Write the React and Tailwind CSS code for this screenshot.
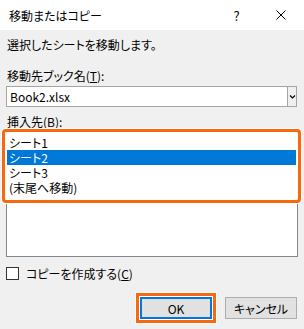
import React from 'react';

const font = { fontFamily: '"Noto Sans CJK JP", "Noto Sans", sans-serif' };

const sheets = ['シート1', 'シート2', 'シート3', '(末尾へ移動)'];

export default function App() {
  return (
    <div
      className="w-[304px] h-[329px] bg-[#f0f0f0] text-[12px] leading-[15px] text-black overflow-hidden [font-feature-settings:'palt']"
      style={font}
    >
      {/* title bar */}
      <div className="h-[30px] bg-white flex items-center">
        <div className="flex-1 pl-[9px] text-[12px]">移動またはコピー</div>
        <div className="w-[46px] h-full flex items-center justify-center text-[13px] pl-[3px]">?</div>
        <div className="w-[46px] h-full flex items-center justify-center">
          <svg width="10" height="10" viewBox="0 0 10 10">
            <path d="M0.5 0.5 L9.5 9.5 M9.5 0.5 L0.5 9.5" stroke="#000" strokeWidth="1" fill="none" />
          </svg>
        </div>
      </div>

      <div className="px-[6px] pt-[7px] flex flex-col">
        <div className="pl-px">選択したシートを移動します。</div>

        <div className="mt-[16px] pl-px">
          移動先ブック名(<span className="underline">T</span>):
        </div>
        <div className="mt-[3px] h-[21px] mr-px flex border border-[#a5a5a5] bg-white">
          <div className="flex-1 flex items-center pl-[3px] text-[12px]">Book2.xlsx</div>
          <div className="w-[9px] border-l border-[#a5a5a5] bg-[#f0f0f0] flex items-center justify-center">
            <svg width="7" height="5" viewBox="0 0 7 5">
              <path d="M1 1.5 L3.5 4 L6 1.5" stroke="#000" strokeWidth="1.2" fill="none" />
            </svg>
          </div>
        </div>

        <div className="mt-[7px] pl-px">
          挿入先(<span className="underline">B</span>):
        </div>
        <div className="relative mt-px h-[127px] border border-[#828790] bg-white pt-[4px]">
          {sheets.map((s, i) => (
            <div
              key={s}
              className={
                'h-[15px] leading-[15px] pl-[2px] mr-px ' + (i === 1 ? 'bg-[#0078d7] text-white' : '')
              }
            >
              {s}
            </div>
          ))}
          <div className="absolute -left-[5px] -top-[2px] -right-[4px] h-[74px] border-[3px] border-[#f7680f] rounded-[4px] shadow-[inset_0_0_0_2px_#fff,0_0_0_1px_#fff] pointer-events-none"></div>
        </div>

        <div className="mt-[10px] flex items-center h-[13px]">
          <div className="w-[13px] h-[13px] border border-[#333] bg-white"></div>
          <div className="ml-[7px]">
            コピーを作成する(<span className="underline">C</span>)
          </div>
        </div>

        <div className="mt-[17px] flex justify-end gap-[13px] mr-px">
          <div className="w-[72px] h-[22px] bg-[#e1e1e1] border-2 border-[#0078d7] flex items-center justify-center shadow-[0_0_0_1px_#fff,0_0_0_4px_#f7680f,0_0_0_5px_#fff]">
            OK
          </div>
          <div className="w-[72px] h-[22px] bg-[#e1e1e1] border border-[#adadad] flex items-center justify-center">
            キャンセル
          </div>
        </div>
      </div>
    </div>
  );
}
